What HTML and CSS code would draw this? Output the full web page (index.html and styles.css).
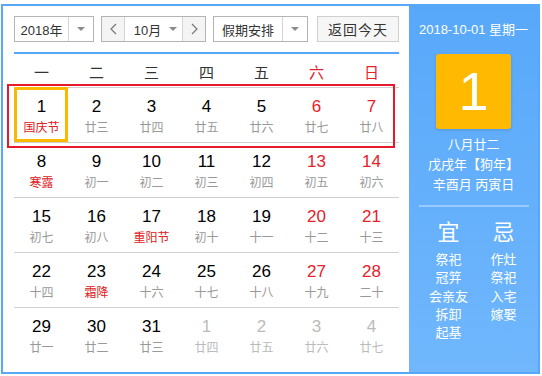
FILE: index.html
```html
<!DOCTYPE html>
<html lang="zh-CN">
<head>
<meta charset="utf-8">
<title>万年历</title>
<link rel="stylesheet" href="styles.css">
</head>
<body>
<div class="cal">
  <div class="main">
    <div class="toolbar">
      <div class="sel sel-year"><span class="sel-text">2018年</span><span class="sel-arrow"><i class="tri"></i></span></div>
      <div class="sel sel-month">
        <span class="nav"><svg width="7" height="12" viewBox="0 0 7 12"><polyline points="6,1 1,6 6,11" fill="none" stroke="#777" stroke-width="1.2"/></svg></span>
        <span class="month-text">10月<i class="tri"></i></span>
        <span class="nav"><svg width="7" height="12" viewBox="0 0 7 12"><polyline points="1,1 6,6 1,11" fill="none" stroke="#777" stroke-width="1.2"/></svg></span>
      </div>
      <div class="sel sel-holiday"><span class="sel-text">假期安排</span><span class="sel-arrow"><i class="tri"></i></span></div>
      <div class="btn-today">返回今天</div>
    </div>
    <div class="weekhead">
      <span>一</span><span>二</span><span>三</span><span>四</span><span>五</span><span class="we">六</span><span class="we">日</span>
    </div>
    <div class="grid">
      <div class="week hl">
        <div class="day today"><b>1</b><em class="fest">国庆节</em></div>
        <div class="day"><b>2</b><em>廿三</em></div>
        <div class="day"><b>3</b><em>廿四</em></div>
        <div class="day"><b>4</b><em>廿五</em></div>
        <div class="day"><b>5</b><em>廿六</em></div>
        <div class="day we"><b>6</b><em>廿七</em></div>
        <div class="day we"><b>7</b><em>廿八</em></div>
      </div>
      <div class="week">
        <div class="day"><b>8</b><em class="fest">寒露</em></div>
        <div class="day"><b>9</b><em>初一</em></div>
        <div class="day"><b>10</b><em>初二</em></div>
        <div class="day"><b>11</b><em>初三</em></div>
        <div class="day"><b>12</b><em>初四</em></div>
        <div class="day we"><b>13</b><em>初五</em></div>
        <div class="day we"><b>14</b><em>初六</em></div>
      </div>
      <div class="week">
        <div class="day"><b>15</b><em>初七</em></div>
        <div class="day"><b>16</b><em>初八</em></div>
        <div class="day"><b>17</b><em class="fest">重阳节</em></div>
        <div class="day"><b>18</b><em>初十</em></div>
        <div class="day"><b>19</b><em>十一</em></div>
        <div class="day we"><b>20</b><em>十二</em></div>
        <div class="day we"><b>21</b><em>十三</em></div>
      </div>
      <div class="week">
        <div class="day"><b>22</b><em>十四</em></div>
        <div class="day"><b>23</b><em class="fest">霜降</em></div>
        <div class="day"><b>24</b><em>十六</em></div>
        <div class="day"><b>25</b><em>十七</em></div>
        <div class="day"><b>26</b><em>十八</em></div>
        <div class="day we"><b>27</b><em>十九</em></div>
        <div class="day we"><b>28</b><em>二十</em></div>
      </div>
      <div class="week">
        <div class="day"><b>29</b><em>廿一</em></div>
        <div class="day"><b>30</b><em>廿二</em></div>
        <div class="day"><b>31</b><em>廿三</em></div>
        <div class="day other"><b>1</b><em>廿四</em></div>
        <div class="day other"><b>2</b><em>廿五</em></div>
        <div class="day other"><b>3</b><em>廿六</em></div>
        <div class="day other"><b>4</b><em>廿七</em></div>
      </div>
    </div>
  </div>
  <div class="side">
    <div class="side-date">2018-10-01 星期一</div>
    <div class="big-day">1</div>
    <div class="lunar">
      <div>八月廿二</div>
      <div>戊戌年【狗年】</div>
      <div>辛酉月 丙寅日</div>
    </div>
    <div class="divider"></div>
    <div class="yiji">
      <div class="col">
        <div class="yj-title">宜</div>
        <div>祭祀</div><div>冠笄</div><div>会亲友</div><div>拆卸</div><div>起基</div>
      </div>
      <div class="col">
        <div class="yj-title">忌</div>
        <div>作灶</div><div>祭祀</div><div>入宅</div><div>嫁娶</div>
      </div>
    </div>
  </div>
</div>
</body>
</html>
```
FILE: styles.css
```css
* { box-sizing: border-box; }
html, body { margin: 0; padding: 0; background: #fff; }
body {
  font-family: "Liberation Sans", "Noto Sans CJK SC", sans-serif;
  color: #333;
}
.cal {
  margin: 4px 0 0 1px;
  width: 539px;
  height: 370px;
  border: 2px solid #58a8f9;
  display: flex;
}
.main {
  width: 406px;
  padding: 10px 10px 0 11px;
}
.toolbar {
  display: flex;
  height: 26px;
  font-size: 13px;
}
.sel {
  display: flex;
  height: 26px;
  border: 1px solid #b4b4b4;
  background: #fff;
}
.sel-year { width: 80px; margin-right: 7px; }
.sel-month { width: 105px; margin-right: 7px; }
.sel-holiday { width: 95px; margin-right: 9px; }
.sel-text {
  flex: 1;
  display: flex;
  align-items: center;
  justify-content: center;
  border-right: 1px solid #d4d4d4;
}
.sel-arrow {
  width: 24px;
  display: flex;
  align-items: center;
  justify-content: center;
}
.tri {
  display: inline-block;
  width: 0;
  height: 0;
  border-left: 4px solid transparent;
  border-right: 4px solid transparent;
  border-top: 4px solid #8a8a8a;
}
.nav {
  width: 22px;
  background: #f4f4f4;
  display: flex;
  align-items: center;
  justify-content: center;
}
.month-text {
  flex: 1;
  display: flex;
  align-items: center;
  justify-content: center;
  gap: 8px;
  border-left: 1px solid #d4d4d4;
  border-right: 1px solid #d4d4d4;
  padding-left: 4px;
}
.btn-today {
  width: 82px;
  height: 26px;
  border: 1px solid #cfcfcf;
  background: #f6f6f6;
  display: flex;
  align-items: center;
  justify-content: center;
  font-size: 14px;
  letter-spacing: 1px;
}
.weekhead {
  margin-top: 10px;
  border-top: 2px solid #58a8f9;
  height: 35px;
  display: grid;
  grid-template-columns: repeat(7, 55px);
  align-items: center;
  font-size: 15px;
  color: #333;
  font-family: "Noto Sans CJK SC", sans-serif;
}
.weekhead span { text-align: center; padding-top: 1px; }
.weekhead .we { color: #e8202a; }
.week {
  display: grid;
  grid-template-columns: repeat(7, 55px);
  height: 55px;
  border-top: 1px solid #cfcfcf;
}
.week:last-child { border-bottom: none; }
.week.hl { position: relative; }
.week.hl::after {
  content: "";
  position: absolute;
  left: -7px;
  right: 4px;
  top: -4px;
  bottom: -6px;
  border: 2px solid #e8192c;
  pointer-events: none;
}
.day {
  position: relative;
  display: flex;
  flex-direction: column;
  align-items: center;
  padding-top: 9px;
}
.day b {
  font-weight: normal;
  font-size: 17px;
  line-height: 20px;
  color: #000;
}
.day em {
  font-style: normal;
  font-size: 12px;
  line-height: 20px;
  color: #999;
  font-family: "Noto Sans CJK SC", sans-serif;
}
.day em.fest { color: #e02020; }
.day.we b { color: #e8202a; }
.day.other b, .day.other em { color: #bbb; }
.day.today::before {
  content: "";
  position: absolute;
  left: 0;
  right: 1px;
  top: -1px;
  bottom: 0;
  border: 3px solid #fbb800;
}
.side {
  flex: 1;
  background: linear-gradient(#58a8fa, #70b7fd);
  color: #fff;
  display: flex;
  flex-direction: column;
  align-items: center;
  padding-top: 16px;
  font-size: 13px;
}
.side-date { line-height: 16px; font-size: 13px; }
.big-day {
  margin-top: 16px;
  width: 75px;
  height: 75px;
  border-radius: 3px;
  background: #ffb900;
  box-shadow: 0 1px 3px rgba(0,0,0,0.15);
  font-size: 54px;
  line-height: 75px;
  text-align: center;
}
.lunar {
  margin-top: 6px;
  text-align: center;
  line-height: 20px;
  font-size: 13px;
}
.divider {
  margin-top: 10px;
  width: 110px;
  height: 2px;
  background: rgba(255,255,255,0.35);
}
.yiji {
  margin-top: 12px;
  display: flex;
  align-self: stretch;
  padding-left: 12px;
}
.col {
  width: 55px;
  text-align: center;
  line-height: 18.3px;
  font-size: 13px;
}
.yj-title {
  font-size: 22px;
  line-height: 28px;
  margin-bottom: 4px;
}
```
